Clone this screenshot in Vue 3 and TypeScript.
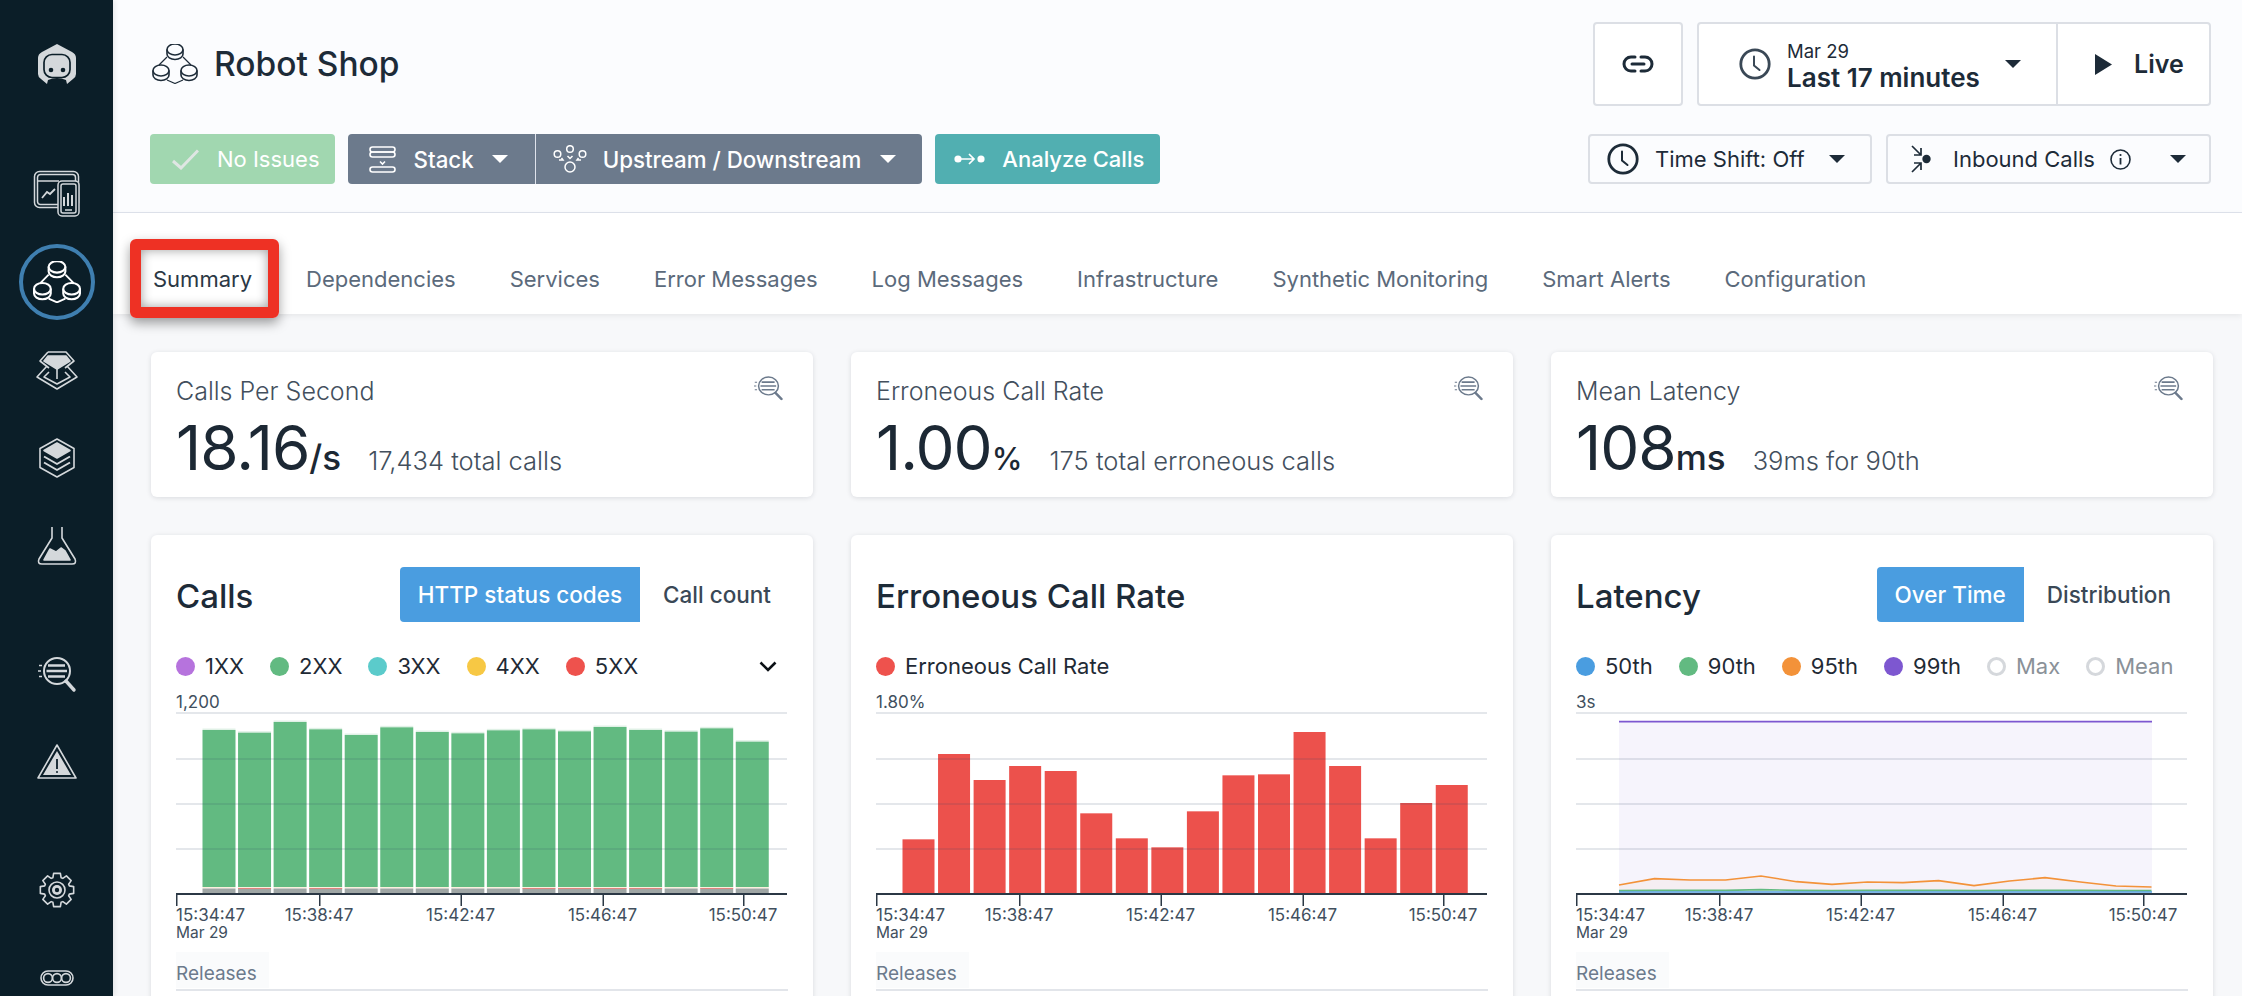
<script setup lang="ts">
const tabs = ['Summary', 'Dependencies', 'Services', 'Error Messages', 'Log Messages', 'Infrastructure', 'Synthetic Monitoring', 'Smart Alerts', 'Configuration']

const stats = [
  { title: 'Calls Per Second', value: '18.16', unit: '/s', sub: '17,434 total calls' },
  { title: 'Erroneous Call Rate', value: '1.00', unit: '%', sub: '175 total erroneous calls' },
  { title: 'Mean Latency', value: '108', unit: 'ms', sub: '39ms for 90th' }
]

const scale = (v: number) => v / 3 - 150

const callTops = [570, 578, 546, 568, 585, 562, 576, 580, 571, 568, 574, 561, 570, 575, 565, 605]
const callRed = [false, true, false, true, false, false, false, false, false, true, true, true, true, false, true, false]
const callBars = callTops.map((t, i) => ({ x: 26.5 + i * 35.55, top: scale(t), red: callRed[i] }))

const errTops = [898, 642, 720, 678, 693, 820, 895, 922, 814, 706, 703, 576, 678, 895, 789, 735]
const errBars = errTops.map((t, i) => ({ x: 26.5 + i * 35.55, top: scale(t) }))

const orange = [1035, 1016, 1020, 1020, 1008, 1025, 1033, 1026, 1028, 1022, 1037, 1023, 1013, 1026, 1038, 1041]
const xOf = (i: number) => 43 + i * 35.5
const orangeLine = orange.map((v, i) => `${xOf(i)},${scale(v)}`).join(' ')
const orangeArea = `${orangeLine} ${xOf(15)},204 ${xOf(0)},204`
const greenLine = [1052, 1051, 1051, 1051, 1049, 1051, 1052, 1051, 1051, 1051, 1052, 1051, 1051, 1051, 1052, 1052].map((v, i) => `${xOf(i)},${scale(v)}`).join(' ')

const gridYs = [23, 69, 114, 159]
const ticks = [0, 143, 284.5, 426.5, 567]
const tickLabels = ['15:34:47', '15:38:47', '15:42:47', '15:46:47', '15:50:47']

const coins = [
  { x: 23, y: 8 },
  { x: 9, y: 29 },
  { x: 37, y: 29 }
]

const charts = [
  {
    id: 'calls', title: 'Calls', toggle: ['HTTP status codes', 'Call count'], yLabel: '1,200', more: true,
    legend: [
      { label: '1XX', color: '#b673dd' }, { label: '2XX', color: '#62ba81' }, { label: '3XX', color: '#5bcbcb' },
      { label: '4XX', color: '#f7c844' }, { label: '5XX', color: '#ee524d' }
    ]
  },
  {
    id: 'errors', title: 'Erroneous Call Rate', toggle: [] as string[], yLabel: '1.80%', more: false,
    legend: [{ label: 'Erroneous Call Rate', color: '#ee524d' }]
  },
  {
    id: 'latency', title: 'Latency', toggle: ['Over Time', 'Distribution'], yLabel: '3s', more: false,
    legend: [
      { label: '50th', color: '#4a9de0' }, { label: '90th', color: '#62ba81' }, { label: '95th', color: '#f39239' },
      { label: '99th', color: '#7d57d0' }, { label: 'Max', color: '' }, { label: 'Mean', color: '' }
    ]
  }
]

function gearPath(): string {
  const cx = 18, cy = 18, R = 17, r = 13
  const parts: string[] = []
  for (let i = 0; i < 8; i++) {
    const a = (i / 8) * Math.PI * 2
    const pts = [[r, a - 0.32], [R, a - 0.2], [R, a + 0.2], [r, a + 0.32]]
    for (const [rad, ang] of pts) {
      parts.push(`${(cx + rad * Math.cos(ang)).toFixed(2)} ${(cy + rad * Math.sin(ang)).toFixed(2)}`)
    }
  }
  return 'M' + parts.join('L') + 'Z'
}
const gear = gearPath()
</script>

<template>
  <div class="app">
    <svg class="defs" aria-hidden="true">
      <symbol id="svc" viewBox="0 0 46 40">
        <g class="svc-g" fill="none" stroke="currentColor" stroke-linejoin="round">
          <path class="svc-link" d="M15 13 L7 21 M31 13 L39 21 M15 36 L23 39.5 L31 36" />
          <g v-for="c in coins" :key="c.x">
            <path class="coin" :d="`M${c.x - 8} ${c.y - 2.5} V${c.y + 2} a8 5.5 0 0 0 16 0 V${c.y - 2.5}`" />
            <ellipse class="coin" :cx="c.x" :cy="c.y - 2.5" rx="8" ry="5.5" />
          </g>
        </g>
      </symbol>
      <symbol id="logs" viewBox="0 0 38 38">
        <g fill="none" stroke="currentColor">
          <circle cx="19" cy="16" r="13" stroke-width="2" />
          <path d="M10 10.5 H27 M8.5 16 H29 M10 21.5 H27" stroke-width="2.4" />
          <path d="M1 10.5 H4 M0 16 H3 M1 21.5 H4" stroke-width="1.6" />
          <path d="M28 26 L36 35" stroke-width="3.4" stroke-linecap="round" />
        </g>
      </symbol>
      <symbol id="clock" viewBox="0 0 32 32">
        <g fill="none" stroke="currentColor" stroke-width="2.8" stroke-linecap="round">
          <circle cx="16" cy="16" r="14.2" />
          <path d="M15 8.5 V17.5 L20.5 22" stroke-width="2" />
        </g>
      </symbol>
    </svg>

    <aside class="sidebar">
      <div class="logo">
        <svg width="44" height="44" viewBox="0 0 44 44">
          <path d="M22 1 L37 9 Q41 11 41 15 L41 31 Q41 34 38 36 L32 41 L31 37 Q22 33 13 37 L12 41 L6 36 Q3 34 3 31 L3 15 Q3 11 7 9Z" fill="#d4d8db" />
          <rect x="9" y="11.5" width="26" height="23" rx="8" fill="none" stroke="#0b1e28" stroke-width="1.7" />
          <circle cx="16" cy="27" r="2.3" fill="#0b1e28" />
          <circle cx="28" cy="27" r="2.3" fill="#0b1e28" />
        </svg>
      </div>
      <div class="nav-list">
        <div class="nav-item">
          <svg width="48" height="48" viewBox="0 0 48 48" fill="none" stroke="#d4d8db" stroke-width="1.5">
            <rect x="1.5" y="1.5" width="44" height="36" rx="5" />
            <rect x="4.5" y="4.5" width="38" height="30" rx="3" />
            <path d="M5 11 H26" />
            <path d="M9 28 L14 22 L17 24 L22 19" stroke-width="1.8" />
            <rect x="25" y="11" width="21" height="35" rx="4" fill="#0b1e28" />
            <rect x="28" y="14" width="15" height="29" rx="2" />
            <path d="M31 36 V27 M35 36 V23 M39 36 V25" stroke-width="2" />
            <path d="M32 40 H39" />
          </svg>
        </div>
        <div class="nav-item">
          <div class="nav-ring">
            <svg class="svc-side" width="48" height="42"><use href="#svc" /></svg>
          </div>
        </div>
        <div class="nav-item">
          <svg width="44" height="40" viewBox="0 0 44 40" fill="none" stroke="#d4d8db" stroke-width="1.6" stroke-linejoin="round">
            <path d="M13 2 H31 L39 11 L30 18 M13 2 L5 11 L14 18" />
            <path d="M13 6 H31 L35 11 L22 19 L9 11Z" fill="#d4d8db" />
            <path d="M22 19 V29" />
            <path d="M12 16 L2 27 L22 39 L42 27 L32 16" />
            <path d="M14 22 L9 27 L22 34 L35 27 L30 22" />
          </svg>
        </div>
        <div class="nav-item">
          <svg width="36" height="40" viewBox="0 0 36 40" fill="none" stroke="#d4d8db" stroke-width="1.6" stroke-linejoin="round">
            <path d="M18 1 L35 10.5 V29.5 L18 39 L1 29.5 V10.5Z" />
            <path d="M18 5 L31 12.5 L18 20 L5 12.5Z" fill="#d4d8db" />
            <path d="M5 18.5 L18 26 L31 18.5 M5 24.5 L18 32 L31 24.5" stroke-width="2" />
          </svg>
        </div>
        <div class="nav-item">
          <svg width="40" height="38" viewBox="0 0 40 38" fill="none" stroke="#d4d8db" stroke-width="1.6" stroke-linejoin="round">
            <path d="M15 0 V11 L2 32 Q0 37 5 37 H35 Q40 37 38 32 L25 11 V0" />
            <path d="M7 33 L13 22 L19 25 L24 21 L28 24 L33 33Z" fill="#d4d8db" />
          </svg>
        </div>
        <div class="nav-item nav-gap">
          <svg class="side-logs" width="40" height="38"><use href="#logs" /></svg>
        </div>
        <div class="nav-item">
          <svg width="40" height="36" viewBox="0 0 40 36" fill="none" stroke="#d4d8db" stroke-width="1.6" stroke-linejoin="round">
            <path d="M20 1 L39 34 H1Z" />
            <path d="M20 7 L34 31 H6Z" fill="#d4d8db" stroke="none" />
            <path d="M20 15 V25" stroke="#0b1e28" stroke-width="1.8" />
            <circle cx="20" cy="28" r="1" fill="#0b1e28" stroke="none" />
          </svg>
        </div>
        <div class="nav-item nav-gap">
          <svg width="36" height="36" viewBox="0 0 36 36" fill="none" stroke="#d4d8db" stroke-width="1.6" stroke-linejoin="round">
            <path :d="gear" />
            <circle cx="18" cy="18" r="8" />
            <circle cx="18" cy="18" r="5" fill="#d4d8db" stroke="none" />
            <circle cx="18" cy="18" r="2.2" fill="#0b1e28" stroke="none" />
          </svg>
        </div>
        <div class="nav-item">
          <svg width="34" height="16" viewBox="0 0 34 16" fill="none" stroke="#d4d8db" stroke-width="1.6">
            <rect x="1" y="1" width="32" height="14" rx="7" />
            <circle cx="8" cy="8" r="4.4" />
            <circle cx="17" cy="8" r="4.4" />
            <circle cx="26" cy="8" r="4.4" />
          </svg>
        </div>
      </div>
    </aside>

    <main class="main">
      <header class="header">
        <div class="head-row top">
          <div class="title-wrap">
            <svg class="svc-head" width="46" height="40"><use href="#svc" /></svg>
            <h1 class="title">Robot Shop</h1>
          </div>
          <div class="top-actions">
            <button class="box link-btn">
              <svg width="32" height="18" viewBox="0 0 32 18" fill="none" stroke="#1d2b38" stroke-width="3" stroke-linecap="round">
                <path d="M13 2 H9 a7 7 0 0 0 0 14 H13 M19 2 H23 a7 7 0 0 1 0 14 H19 M10 9 H22" />
              </svg>
            </button>
            <div class="box time-box">
              <div class="time-left">
                <svg class="clock-soft" width="32" height="32"><use href="#clock" /></svg>
                <div class="time-text">
                  <span class="time-date">Mar 29</span>
                  <span class="time-range">Last 17 minutes</span>
                </div>
                <i class="caret dark"></i>
              </div>
              <div class="time-live">
                <svg width="17" height="21" viewBox="0 0 17 21"><path d="M0 0 L17 10.5 L0 21Z" fill="#1d2b38" /></svg>
                <span class="live-text">Live</span>
              </div>
            </div>
          </div>
        </div>
        <div class="head-row bottom">
          <div class="left-actions">
            <div class="btn ok">
              <svg width="27" height="21" viewBox="0 0 27 21" fill="none" stroke="#dfe6e3" stroke-width="3"><path d="M1 12 L9 19 L26 1.5" /></svg>
              <span>No Issues</span>
            </div>
            <div class="btn-group">
              <div class="btn slate stack">
                <svg width="27" height="27" viewBox="0 0 27 27" fill="none" stroke="#fff" stroke-width="1.6">
                  <rect x="1" y="1" width="25" height="5" rx="2.5" />
                  <rect x="1" y="6" width="25" height="5" rx="2.5" />
                  <path d="M11 15.5 L13.5 18 L16 15.5" />
                  <rect x="1" y="21" width="25" height="5" rx="2.5" />
                </svg>
                <span>Stack</span>
                <i class="caret light"></i>
              </div>
              <div class="btn slate up">
                <svg width="34" height="28" viewBox="0 0 34 28" fill="none" stroke="#fff" stroke-width="1.5">
                  <circle cx="4.5" cy="9" r="3.3" />
                  <circle cx="17" cy="4" r="3.3" />
                  <circle cx="29.5" cy="9" r="3.3" />
                  <circle cx="17" cy="22" r="5" />
                  <path d="M6 15 H10 L8.5 13 M28 15 H24 L25.5 13 M14.5 11 L17 13.5 L19.5 11" />
                </svg>
                <span>Upstream / Downstream</span>
                <i class="caret light"></i>
              </div>
            </div>
            <div class="btn teal">
              <svg width="31" height="14" viewBox="0 0 31 14" fill="none" stroke="#fff" stroke-width="1.7">
                <circle cx="4" cy="7" r="3.6" fill="#fff" stroke="none" />
                <circle cx="27" cy="7" r="3.6" fill="#fff" stroke="none" />
                <path d="M5 7 H20 M15 2 L20 7 L15 12" />
              </svg>
              <span>Analyze Calls</span>
            </div>
          </div>
          <div class="right-actions">
            <div class="box ghost shift">
              <svg class="clock-dark" width="32" height="32"><use href="#clock" /></svg>
              <span>Time Shift: Off</span>
              <i class="caret dark shift-caret"></i>
            </div>
            <div class="box ghost inbound">
              <svg width="20" height="28" viewBox="0 0 20 28" fill="none" stroke="#1d2b38" stroke-width="1.7">
                <path d="M1 1 L10 10 M3 10 H10 V3 M1 27 L10 18 M3 18 H10 V25" />
                <circle cx="15.5" cy="14" r="4.2" fill="#1d2b38" stroke="none" />
              </svg>
              <span class="inbound-text">Inbound Calls</span>
              <svg class="info" width="21" height="21" viewBox="0 0 21 21" fill="none" stroke="#1d2b38" stroke-width="1.6">
                <circle cx="10.5" cy="10.5" r="9.5" />
                <path d="M10.5 9 V15.5" stroke-width="1.8" />
                <circle cx="10.5" cy="6" r="1.1" fill="#1d2b38" stroke="none" />
              </svg>
              <i class="caret dark push"></i>
            </div>
          </div>
        </div>
      </header>

      <nav class="tabs">
        <div v-for="(t, i) in tabs" :key="t" class="tab" :class="{ active: i === 0 }">
          {{ t }}
          <span v-if="i === 0" class="highlight"></span>
        </div>
      </nav>

      <section class="content">
        <div class="grid">
          <article v-for="s in stats" :key="s.title" class="card stat">
            <div class="stat-title">{{ s.title }}</div>
            <svg class="stat-search" width="29" height="26" viewBox="0 0 38 38" preserveAspectRatio="none"><use href="#logs" /></svg>
            <div class="stat-line">
              <span class="stat-value">{{ s.value }}</span><span class="stat-unit" :class="{ pct: s.unit === '%' }">{{ s.unit }}</span>
              <span class="stat-sub">{{ s.sub }}</span>
            </div>
          </article>

          <article v-for="c in charts" :key="c.id" class="card chart">
            <div class="chart-head">
              <h2 class="chart-title">{{ c.title }}</h2>
              <div v-if="c.toggle.length" class="toggle">
                <span class="tog on">{{ c.toggle[0] }}</span>
                <span class="tog off">{{ c.toggle[1] }}</span>
              </div>
            </div>
            <div class="legend">
              <div v-for="l in c.legend" :key="l.label" class="leg" :class="{ muted: !l.color }">
                <i class="dot" :class="{ hollow: !l.color }" :style="l.color ? { background: l.color } : undefined"></i>
                <span>{{ l.label }}</span>
              </div>
              <svg v-if="c.more" class="chev" width="18" height="11" viewBox="0 0 18 11" fill="none" stroke="#0c1116" stroke-width="2.6"><path d="M1.5 1.5 L9 9 L16.5 1.5" /></svg>
            </div>
            <svg class="plot" width="612" height="262" viewBox="0 0 612 262">
              <text class="axis-text" x="0" y="18">{{ c.yLabel }}</text>

              <template v-if="c.id === 'calls'">
                <g v-for="b in callBars" :key="b.x">
                  <rect :x="b.x" :y="b.top - 1.5" width="33" height="1.5" fill="#62ba81" opacity="0.2" />
                  <rect :x="b.x" :y="b.top" width="33" :height="197 - b.top" fill="#62ba81" />
                  <rect :x="b.x" y="197" width="33" height="1.5" fill="#faf0de" />
                  <rect :x="b.x" y="198.5" width="33" height="5.5" fill="#9fa6a5" />
                  <rect v-if="b.red" :x="b.x" y="198" width="33" height="1" fill="#ee524d" opacity="0.6" />
                </g>
              </template>
              <template v-else-if="c.id === 'errors'">
                <rect v-for="b in errBars" :key="b.x" :x="b.x" :y="b.top" width="32" :height="204 - b.top" fill="#ec514c" />
              </template>
              <template v-else>
                <rect x="43" y="31.5" width="533" height="172.5" fill="#7d57d0" opacity="0.065" />
                <polygon :points="orangeArea" fill="#f39239" opacity="0.05" />
                <path d="M43 31.7 H576" stroke="#7d57d0" stroke-width="1.8" fill="none" />
                <polyline :points="orangeLine" stroke="#f39239" stroke-width="1.6" fill="none" />
                <polyline :points="greenLine" stroke="#62ba81" stroke-width="1.6" fill="none" />
                <rect x="43" y="201" width="533" height="3" fill="#4a9de0" opacity="0.7" />
              </template>

              <rect v-for="y in gridYs" :key="y" x="0" :y="y - 1" width="611" height="2" fill="#2f4668" opacity="0.13" />
              <rect x="0" y="203" width="611" height="2" fill="#2b3845" />
              <rect v-for="t in ticks" :key="t" :x="t" y="204" width="1.5" height="12" fill="#2b3845" />
              <text v-for="(l, i) in tickLabels" :key="l" class="axis-text" :x="ticks[i]" y="231" :text-anchor="i === 0 ? 'start' : 'middle'">{{ l }}</text>
              <text class="axis-date" x="0" y="248">Mar 29</text>
            </svg>
            <div class="releases"><span>Releases</span></div>
          </article>
        </div>
      </section>
    </main>
  </div>
</template>

<style>
html, body { margin: 0; background: #f7f8fa; }
</style>

<style scoped>
* { box-sizing: border-box; }
.app {
  display: flex; width: 2242px; height: 996px; overflow: hidden;
  font-family: Inter, "Noto Sans", sans-serif; color: #1d2b38; background: #f7f8fa;
}
.defs { display: none; }
.svc-g { stroke-width: var(--sw, 1.6); }
.svc-link { stroke-width: var(--sl, 1.2); }
.coin { fill: var(--coin, none); }

.sidebar { width: 113px; flex: none; background: #0b1e28; box-shadow: 2px 0 5px rgba(0,0,0,.08); z-index: 3; display: flex; flex-direction: column; align-items: center; }
.logo { height: 130px; flex: none; display: flex; align-items: center; justify-content: center; }
.nav-list { margin-top: 20px; flex: none; display: flex; flex-direction: column; align-items: center; }
.nav-item { height: 88px; width: 100px; flex: none; display: flex; align-items: center; justify-content: center; }
.nav-gap { margin-top: 40px; }
.nav-ring { width: 76px; height: 76px; flex: none; border-radius: 50%; border: 4px solid #3f7fb0; display: flex; align-items: center; justify-content: center; }
.svc-side { color: #fff; --coin: #0b1e28; --sw: 2; --sl: 1.8; }
.side-logs { color: #d4d8db; }

.main { flex: 1; min-width: 0; display: flex; flex-direction: column; }
.header { height: 213px; flex: none; padding: 22px 31px 0 37px; background: #fbfcfe; border-bottom: 1px solid #dfe3ec; }
.head-row { display: flex; justify-content: space-between; }
.head-row.top { height: 84px; }
.head-row.bottom { height: 50px; margin-top: 28px; }

.title-wrap { display: flex; align-items: center; gap: 16px; height: 84px; }
.svc-head { color: #1d2b38; margin-left: 2px; }
.title { margin: 0; font-size: 33.5px; font-weight: 500; line-height: 40px; color: #1d2b38; }

.top-actions { display: flex; gap: 14px; }
.box { border: 2px solid #dcdfe5; border-radius: 4px; background: #fff; }
.link-btn { width: 90px; height: 84px; padding: 0; display: flex; align-items: center; justify-content: center; }
.time-box { width: 514px; height: 84px; display: flex; }
.time-left { width: 359px; display: flex; align-items: center; padding-left: 40px; border-right: 2px solid #dcdfe5; }
.clock-soft { color: #3a4856; flex: none; }
.time-text { display: flex; flex-direction: column; margin-left: 16px; width: 218px; padding-top: 3px; }
.time-date { font-size: 18.5px; line-height: 24px; color: #1d2b38; }
.time-range { font-size: 26px; line-height: 30px; font-weight: 600; color: #1d2b38; white-space: nowrap; }
.time-live { flex: 1; display: flex; align-items: center; padding-left: 37px; gap: 22px; }
.live-text { font-size: 25px; font-weight: 600; }

.caret { display: block; width: 0; height: 0; flex: none; border-left: 8px solid transparent; border-right: 8px solid transparent; }
.caret.dark { border-top: 8px solid #1d2b38; }
.caret.light { border-top: 8px solid #fff; }

.left-actions { display: flex; gap: 13px; }
.btn { height: 50px; display: flex; align-items: center; color: #fff; font-size: 22px; font-weight: 500; white-space: nowrap; border-radius: 4px; }
.btn.ok { background: #a1d7b0; padding: 0 15px 0 22px; gap: 18px; font-weight: 400; }
.btn-group { display: flex; }
.btn.slate { background: #6c7a8c; border-radius: 0; font-size: 22.3px; }
.btn.stack { padding: 0 27px 0 21px; gap: 18px; border-radius: 4px 0 0 4px; border-right: 1px solid #dfe3ec; }
.btn.up { padding: 0 26px 0 17px; gap: 16px; border-radius: 0 4px 4px 0; }
.btn.up .caret { margin-left: 3px; }
.btn.teal { background: #51afb1; padding: 0 16px 0 19px; gap: 17px; }

.right-actions { display: flex; gap: 14px; }
.ghost { height: 50px; background: #fbfcfe; display: flex; align-items: center; font-size: 22px; white-space: nowrap; color: #1d2b38; }
.shift { width: 284px; padding-left: 17px; gap: 16px; }
.shift-caret { margin-left: 8px; }
.clock-dark { color: #1d2b38; flex: none; }
.inbound { width: 325px; padding-left: 23px; }
.inbound-text { margin-left: 22px; }
.info { margin-left: 15px; flex: none; }
.push { margin-left: 39px; }

.tabs { height: 101px; flex: none; background: #fff; display: flex; padding-left: 40px; gap: 54px; box-shadow: 0 2px 6px rgba(0,0,0,.07); z-index: 2; }
.tab { position: relative; display: flex; align-items: center; font-size: 22px; color: #5b6a7b; white-space: nowrap; padding-top: 31px; height: 100%; }
.tab.active { color: #2b3845; }
.highlight { position: absolute; left: -23px; right: -27px; top: 26px; height: 79px; border: 11px solid #ee3124; border-radius: 6px; box-shadow: 0 5px 12px rgba(0,0,0,.38), inset 0 0 11px rgba(0,0,0,.38); }

.content { flex: 1; padding: 38px 29px 0 38px; min-height: 0; }
.grid { display: grid; grid-template-columns: repeat(3, 662px); gap: 38px; }
.card { background: #fff; border-radius: 6px; box-shadow: 0 1px 5px rgba(20,30,50,.13); }
.stat { position: relative; height: 145px; padding: 24px 25px 0; }
.stat-title { font-size: 25px; line-height: 30px; font-weight: 300; color: #434f5d; }
.stat-search { position: absolute; right: 30px; top: 23px; color: #6c7a8c; }
.stat-line { display: flex; align-items: baseline; margin-top: 9px; height: 66px; white-space: nowrap; }
.stat-value { font-size: 62px; line-height: 66px; font-weight: 400; color: #1c2834; letter-spacing: -1px; }
.stat-unit { font-size: 35px; font-weight: 500; color: #1c2834; }
.stat-unit.pct { font-size: 31px; }
.stat-sub { font-size: 25.5px; font-weight: 300; color: #434f5d; margin-left: 27px; }

.chart { height: 520px; padding: 32px 25px 0; }
.chart-head { height: 55px; display: flex; align-items: center; justify-content: space-between; }
.chart-title { margin: 0; padding-top: 2px; font-size: 33px; line-height: 40px; font-weight: 500; color: #1d2b38; }
.toggle { display: flex; height: 55px; font-size: 22.5px; font-weight: 500; }
.tog { display: flex; align-items: center; white-space: nowrap; }
.tog.on { background: #4a9de0; color: #fff; padding: 0 18px; border-radius: 4px 0 0 4px; }
.tog.off { color: #3a4856; padding: 0 17px 0 23px; }

.legend { display: flex; align-items: center; gap: 26px; height: 30px; margin-top: 29px; font-size: 22px; color: #1f2a35; }
.leg { display: flex; align-items: center; gap: 10px; white-space: nowrap; }
.leg.muted { color: #8a9198; }
.dot { width: 19px; height: 19px; border-radius: 50%; flex: none; display: block; }
.dot.hollow { border: 3px solid #d5d8dc; }
.chev { margin-left: auto; margin-right: 11px; }

.plot { display: block; margin-top: 9px; }
.axis-text { font-size: 17px; fill: #414f5e; }
.axis-date { font-size: 15.5px; fill: #414f5e; }

.releases { height: 39px; border-bottom: 2px solid #e2e5ea; font-size: 19px; color: #6c7a8c; display: flex; }
.releases span { background: #fafbfc; height: 36px; width: 93px; line-height: 44px; }
</style>
